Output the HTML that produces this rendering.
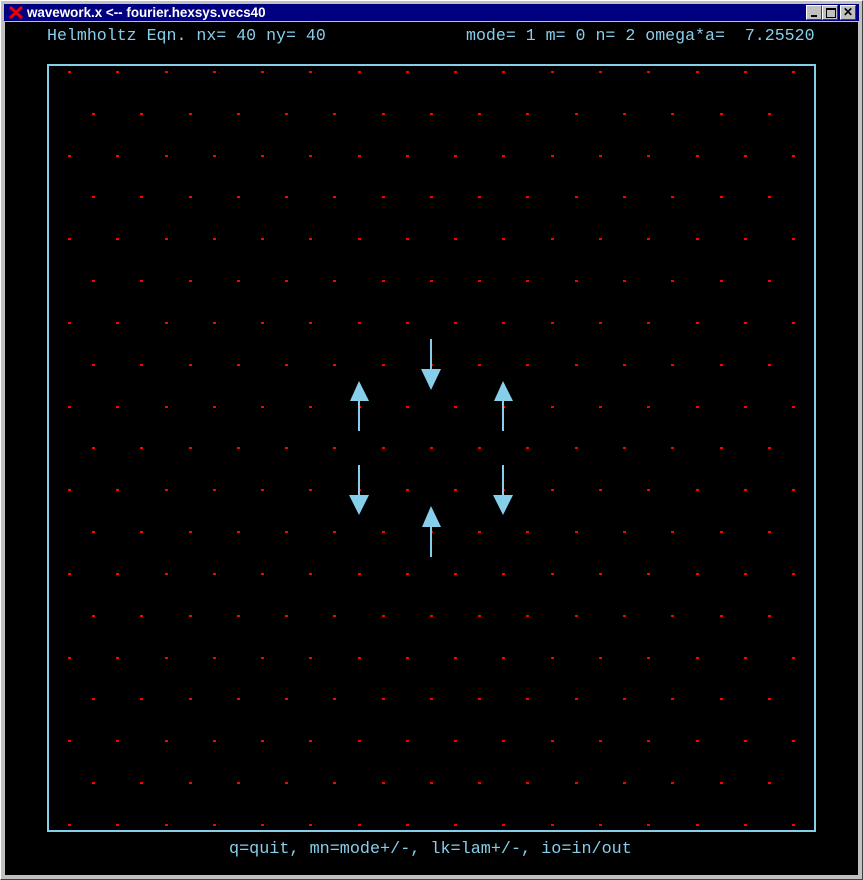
<!DOCTYPE html>
<html><head><style>
body{margin:0;width:863px;height:880px;overflow:hidden;background:#c0c0c0;position:relative;font-family:"Liberation Mono",monospace}
#win{position:absolute;left:0;top:0;border-right:1px solid #404040;border-bottom:1px solid #404040;border-left:1px solid #fff;border-top:1px solid #fff;box-sizing:border-box;width:863px;height:880px}
#title{position:absolute;left:4px;top:4px;width:855px;height:17px;background:#000080;color:#fff;font:bold 13.4px "Liberation Sans",sans-serif;line-height:17px}
#content{position:absolute;left:5px;top:22px;width:853px;height:853px;background:#000}
.btn{position:absolute;top:1px;width:16px;height:15px;background:#c0c0c0;border-top:1px solid #fff;border-left:1px solid #fff;border-right:1px solid #404040;border-bottom:1px solid #404040;box-sizing:border-box;font:bold 12px "Liberation Sans",sans-serif;color:#000;text-align:center;line-height:13px}
.t{position:absolute;color:#87ceeb;font-size:16.6px;white-space:pre;line-height:20px}
</style></head><body>
<div id="win"></div>
<div id="title">
<svg style="position:absolute;left:5px;top:2px" width="14" height="13"><path d="M1 1 L13 12 M13 1 L1 12" stroke="#e00" stroke-width="3"/></svg>
<span style="position:absolute;left:23px;top:0">wavework.x &lt;-- fourier.hexsys.vecs40</span>
<div class="btn" style="left:802px"><div style="position:absolute;left:4px;top:9px;width:6px;height:2px;background:#000"></div></div>
<div class="btn" style="left:818px"><div style="position:absolute;left:3px;top:2px;width:8px;height:7px;border:1px solid #000;border-top-width:2px"></div></div>
<div class="btn" style="left:836px">✕</div>
</div>
<div id="content"></div>
<div class="t" style="left:47px;top:26px">Helmholtz Eqn. nx= 40 ny= 40</div>
<div class="t" style="left:466px;top:26px">mode= 1 m= 0 n= 2 omega*a=  7.25520</div>
<div class="t" style="left:229px;top:840px;font-size:16.8px">q=quit, mn=mode+/-, lk=lam+/-, io=in/out</div>
<svg style="position:absolute;left:0;top:0" width="863" height="880">
<rect x="48" y="65" width="767" height="766" fill="none" stroke="#87ceeb" stroke-width="2"/>
<g id="dots" fill="#f00"></g>
<g fill="#87ceeb" stroke="#87ceeb">
<line x1="431" y1="339" x2="431" y2="380" stroke-width="2"/><polygon points="421,369 441,369 431,390" stroke="none"/>
<line x1="359" y1="395" x2="359" y2="431" stroke-width="2"/><polygon points="350,401 369,401 359,381" stroke="none"/>
<line x1="503" y1="395" x2="503" y2="431" stroke-width="2"/><polygon points="494,401 513,401 503,381" stroke="none"/>
<line x1="359" y1="465" x2="359" y2="505" stroke-width="2"/><polygon points="349,495 369,495 359,515" stroke="none"/>
<line x1="503" y1="465" x2="503" y2="505" stroke-width="2"/><polygon points="493,495 513,495 503,515" stroke="none"/>
<line x1="431" y1="516" x2="431" y2="557" stroke-width="2"/><polygon points="422,527 441,527 431,506" stroke="none"/>
</g>
</svg>
<script>
var g=document.getElementById('dots'),s='';
for(var r=0;r<19;r++){var y=Math.round(72+r*41.83);var even=r%2==0;var n=even?16:15;var x0=even?69:93;
for(var i=0;i<n;i++){var x=Math.round(x0+i*48.27);s+='<rect x="'+(x-1)+'" y="'+(y-1)+'" width="3" height="2"/>';}}
g.innerHTML=s;
</script>
</body></html>
